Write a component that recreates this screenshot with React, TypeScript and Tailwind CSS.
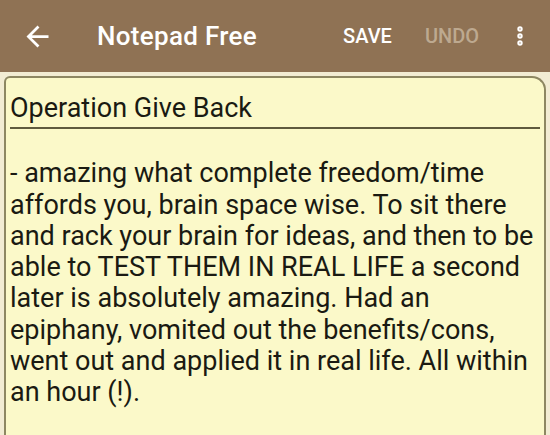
import { EllipsisVertical } from "lucide-react";

const lines = [
  "- amazing what complete freedom/time",
  "affords you, brain space wise. To sit there",
  "and rack your brain for ideas, and then to be",
  "able to TEST THEM IN REAL LIFE a second",
  "later is absolutely amazing. Had an",
  "epiphany, vomited out the benefits/cons,",
  "went out and applied it in real life. All within",
  "an hour (!).",
];

function BackArrow() {
  return (
    <svg viewBox="0 0 24 24" className="w-[33px] h-[33px] fill-white">
      <path d="M20 11H7.83l5.59-5.59L12 4l-8 8 8 8 1.41-1.41L7.83 13H20v-2z" />
    </svg>
  );
}

export default function App() {
  return (
    <div className="w-[550px] h-[435px] overflow-hidden bg-[#f2ecd3] font-['Roboto',sans-serif]">
      <div className="h-[72px] bg-[#8f7254] flex items-center text-white">
        <div className="ml-[21px]">
          <BackArrow />
        </div>
        <div className="ml-[43px] text-[26px] font-medium tracking-[0.3px]">Notepad Free</div>
        <div className="ml-auto text-[20px] font-medium">SAVE</div>
        <div className="ml-[33px] text-[20px] font-medium text-[#bda990]">UNDO</div>
        <EllipsisVertical className="ml-[29px] mr-[18px] w-[24px] h-[24px]" strokeWidth={3.4} />
      </div>
      <div className="mx-[4px] mt-[4px] h-[400px] bg-[#fbf9c9] border-2 border-b-0 border-[#8d8762] rounded-tl-[6px] rounded-tr-[14px] text-[27px] leading-[31.25px] text-[#1a1a12]">
        <div className="mx-[4px] pt-[15px] pb-[3px] border-b-2 border-[#5f5b3e]">Operation Give Back</div>
        <div className="pl-[4px] mt-[29px]">
          {lines.map((l) => (
            <div key={l} className="whitespace-nowrap">{l}</div>
          ))}
        </div>
      </div>
    </div>
  );
}
